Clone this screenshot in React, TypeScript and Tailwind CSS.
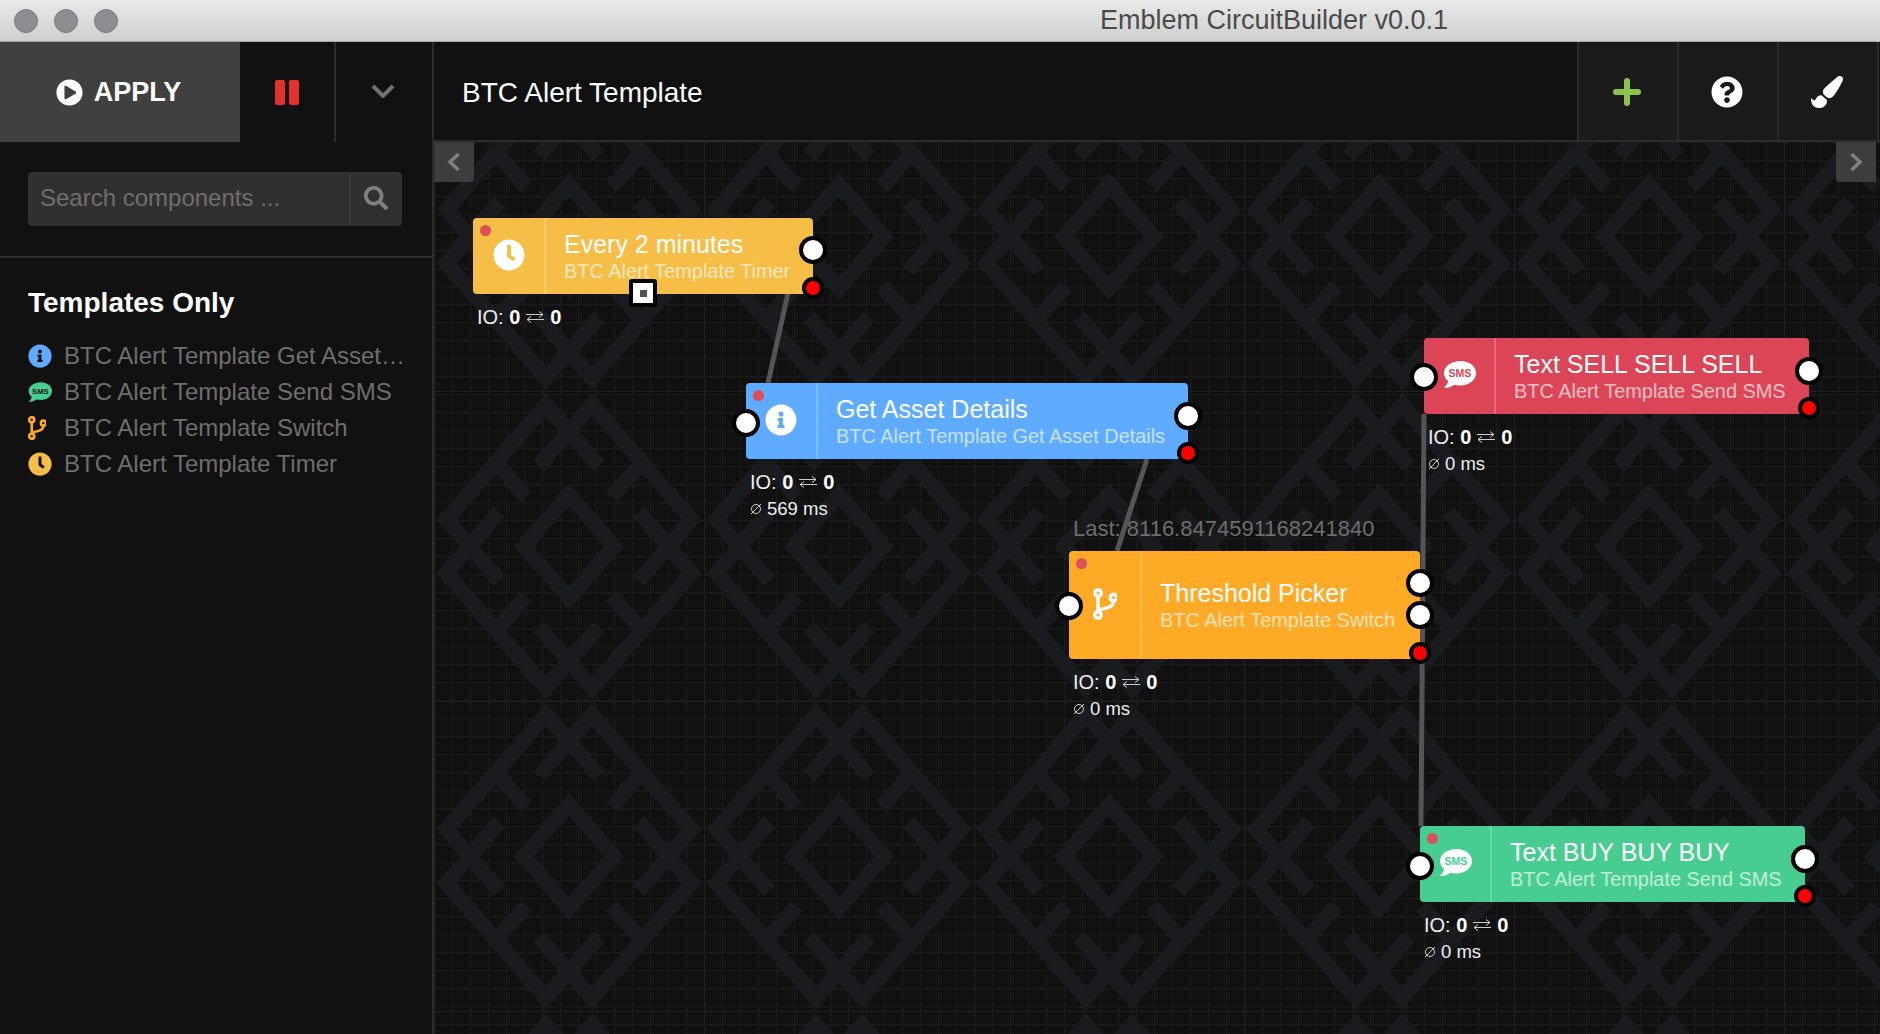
import { FaClock, FaInfoCircle, FaPaintBrush, FaPlayCircle, FaQuestionCircle, FaSearch } from "react-icons/fa";

const SANS = "font-['Liberation_Sans',Arial,sans-serif]";

// speech bubble with the letters in the fill colour behind it
function SmsIcon({ className, bubble, letters }: { className: string; bubble: string; letters: string }) {
  return (
    <svg viewBox="0 0 33 29" className={className}>
      <path
        fill={bubble}
        d="M17.5 1C8.9 1 1 5.9 1 13c0 3.2 1.6 6 4.2 8.1C4.9 23.8 3 26.4.6 28c3.6.2 8-1 11.1-3.2 1.8.4 3.8.6 5.8.6C26.2 25.4 33 20 33 13S26.200 1 17.500 1z"
      />
      <text
        x="17"
        y="17"
        textAnchor="middle"
        fontSize="10.500"
        fontWeight="700"
        fontFamily="'Liberation Sans',sans-serif"
        fill={letters}
      >
        SMS
      </text>
    </svg>
  );
}

function BranchIcon({ className }: { className: string }) {
  return (
    <svg viewBox="0 0 24 32" fill="none" stroke="currentColor" strokeWidth="3.500" className={className}>
      <circle cx="5" cy="5" r="3.300" />
      <circle cx="5" cy="27" r="3.300" />
      <circle cx="20.500" cy="9.500" r="3.300" />
      <path d="M5 8.500v15" />
      <path d="M20.500 13c0 5-4 6.500-8 7.300-4 .8-7.500 1-7.500 3.700" />
    </svg>
  );
}

function Background() {
  return (
    <svg className="absolute inset-0 w-full h-full">
      <defs>
        <g id="quarter">
          <path d="M29.900 -80.400 L-23 -141.600 L-122.500 -26.800 L-69.700 34.400" />
          <path d="M-71.600 -82.300 L-42.900 -49.700" />
        </g>
        <pattern id="grid" width="18" height="18" patternUnits="userSpaceOnUse">
          <path d="M.5 0V18M0 .5H18" stroke="#1a1a1a" strokeWidth="1.500" fill="none" />
        </pattern>
        <pattern id="tile" width="270" height="310" patternUnits="userSpaceOnUse" patternTransform="translate(0 -61)">
          <path d="M.5 0V310M0 .5H270" stroke="#202020" strokeWidth="1" fill="none" />
          <g transform="translate(135 155.400)" fill="none" stroke="#1a1b1f" strokeWidth="15" strokeLinejoin="miter">
            <path d="M0 -52 L45 0 L0 52 L-45 0Z" />
            <use href="#quarter" />
            <use href="#quarter" transform="scale(-1 1)" />
            <use href="#quarter" transform="scale(1 -1)" />
            <use href="#quarter" transform="scale(-1 -1)" />
          </g>
        </pattern>
      </defs>
      <rect width="100%" height="100%" fill="url(#grid)" />
      <rect width="100%" height="100%" fill="url(#tile)" />
      {/* wires */}
      <g stroke="#555555" strokeWidth="5" fill="none">
        <path d="M354 151 L334 241" />
        <path d="M713 317 L683 409" />
        <path d="M990 272 L987 684" />
      </g>
    </svg>
  );
}

function Port({ className }: { className: string }) {
  return <div className={`absolute w-[28px] h-[28px] -translate-x-1/2 -translate-y-1/2 rounded-full bg-white border-4 border-black ${className}`} />;
}

function ErrorPort({ className }: { className: string }) {
  return <div className={`absolute w-[22px] h-[22px] -translate-x-1/2 -translate-y-1/2 rounded-full bg-[#ff0000] border-4 border-black ${className}`} />;
}

function Stats({ ms }: { ms?: string }) {
  return (
    <div className="mt-[11px] ml-[4px] text-[20px] leading-[24px] text-[#eeeeee]">
      <div className="flex items-center gap-[6px]">
        <span>
          IO: <b className="text-white">0</b>
        </span>
        <svg viewBox="0 0 18 12" className="w-[18px] h-[12px]" fill="none" stroke="#cccccc" strokeWidth="1">
          <path d="M0 3.500h17M13 .5l4 3M18 8.500H1M5 5.500l-4 3M5 11.500l-4-3M13 6.500l4-3" />
        </svg>
        <b className="text-white">0</b>
      </div>
      {ms && (
        <div className="mt-[3px] flex items-center gap-[5px] text-[18.500px] leading-[24px]">
          <svg viewBox="0 0 12 12" className="w-[12px] h-[12px]" fill="none" stroke="#d0d0d0" strokeWidth="1">
            <circle cx="6" cy="6" r="4.500" />
            <path d="M1 11L11 1" />
          </svg>
          {ms}
        </div>
      )}
    </div>
  );
}

function CardBody({
  icon,
  title,
  sub,
  dot,
  color,
  cardClass,
  cellClass = "w-[72px]",
}: {
  icon: React.ReactNode;
  title: string;
  sub: string;
  dot: boolean;
  color: string;
  cardClass: string;
  cellClass?: string;
}) {
  return (
    <div className={`relative flex rounded-[4px] ${color} ${cardClass}`}>
      {dot && <div className="absolute left-[7px] top-[7px] w-[11px] h-[11px] rounded-full bg-[#de4f5c]" />}
      <div className={`shrink-0 flex items-center justify-center pb-[3px] border-r-2 border-white/20 text-white ${cellClass}`}>{icon}</div>
      <div className="pl-[18px] pb-[1px] flex flex-col justify-center min-w-0 whitespace-nowrap">
        <div className="text-[25px] leading-[30px] text-white">{title}</div>
        <div className="text-[19.900px] leading-[24px] text-white/65">{sub}</div>
      </div>
    </div>
  );
}

const sidebarItems = [
  { label: "BTC Alert Template Get Asset…", icon: <FaInfoCircle className="w-[24px] h-[24px] text-[#5eabff]" /> },
  { label: "BTC Alert Template Send SMS", icon: <SmsIcon className="w-[24px] h-[22px]" bubble="#48cd91" letters="#111111" /> },
  { label: "BTC Alert Template Switch", icon: <BranchIcon className="w-[18px] h-[24px] text-[#ffaa27]" /> },
  { label: "BTC Alert Template Timer", icon: <FaClock className="w-[24px] h-[24px] text-[#f6bd47]" /> },
];

function Sidebar() {
  return (
    <aside className="w-[434px] shrink-0 flex flex-col bg-[#111111] border-r-2 border-[#2b2b2b]">
      <div className="h-[100px] flex shrink-0">
        <button className="w-[240px] pr-[3px] flex items-center justify-center gap-[11px] bg-[#404040] text-white font-bold text-[27px]">
          <FaPlayCircle className="w-[27px] h-[27px]" />
          APPLY
        </button>
        <div className="w-[96px] flex items-center justify-center gap-[4px] border-r-2 border-[#2b2b2b]">
          <div className="w-[10px] h-[25px] rounded-[2px] bg-[#e3312f]" />
          <div className="w-[10px] h-[25px] rounded-[2px] bg-[#e3312f]" />
        </div>
        <div className="flex-1 pb-[2px] pr-[2px] flex items-center justify-center">
          <svg viewBox="0 0 24 14" className="w-[24px] h-[14px]" fill="none" stroke="#707070" strokeWidth="4">
            <path d="M2 2l10 10L22 2" />
          </svg>
        </div>
      </div>
      <div className="h-[116px] pl-[28px] pr-[30px] pt-[30px] border-b-2 border-[#2b2b2b] shrink-0">
        <div className="h-[54px] flex rounded-[4px] bg-[#303030]">
          <div className="flex-1 flex items-center pl-[12px] pb-[2px] text-[24px] text-[#6f6f6f]">Search components ...</div>
          <div className="w-[53px] my-[2px] pb-[3px] pr-[2px] flex items-center justify-center border-l-2 border-[#3d3d3d]">
            <FaSearch className="w-[24px] h-[24px] text-[#808080]" />
          </div>
        </div>
      </div>
      <div className="pl-[28px] pr-[20px] pt-[29px]">
        <h2 className="text-[28px] leading-[32px] font-bold text-white">Templates Only</h2>
        <ul className="mt-[19px]">
          {sidebarItems.map((item) => (
            <li key={item.label} className="h-[36px] flex items-center">
              <div className="w-[36px] shrink-0 flex items-center">{item.icon}</div>
              <span className="whitespace-nowrap text-[24px] text-[#6e6e6e]">{item.label}</span>
            </li>
          ))}
        </ul>
      </div>
    </aside>
  );
}

function Header() {
  return (
    <header className="h-[100px] shrink-0 flex items-stretch bg-[#111111] border-b-2 border-[#2b2b2b]">
      <div className="flex-1 flex items-center pl-[28px] pt-[3px] text-[28px] text-white">BTC Alert Template</div>
      <button className="w-[100px] pr-[2px] pt-[2px] flex items-center justify-center bg-[#1a1a1a] border-l-2 border-[#2b2b2b]">
        <svg viewBox="0 0 28 28" className="w-[28px] h-[28px]" fill="none" stroke="#8bc34a" strokeWidth="6" strokeLinecap="round">
          <path d="M14 3v22M3 14h22" />
        </svg>
      </button>
      <button className="w-[100px] pr-[2px] pt-[2px] flex items-center justify-center bg-[#1a1a1a] border-l-2 border-[#2b2b2b]">
        <FaQuestionCircle className="w-[32px] h-[32px] text-white" />
      </button>
      <button className="w-[100px] pr-[2px] pt-[2px] flex items-center justify-center bg-[#1a1a1a] border-l-2 border-[#2b2b2b]">
        <FaPaintBrush className="w-[32px] h-[32px] text-white" />
      </button>
      <div className="w-[3px] border-l-2 border-[#2b2b2b]" />
    </header>
  );
}

function Canvas() {
  return (
    <main className="relative flex-1 min-h-0 overflow-hidden bg-[#111112]">
      <Background />

      <div className="absolute left-0 top-0 w-[40px] h-[40px] flex items-center justify-center rounded-br-[4px] bg-[#3d3d3d]">
        <svg viewBox="0 0 14 20" className="w-[14px] h-[20px]" fill="none" stroke="#808080" strokeWidth="3.500">
          <path d="M11.500 2L3 10l8.500 8" />
        </svg>
      </div>
      <div className="absolute right-[4px] top-0 w-[40px] h-[40px] flex items-center justify-center rounded-bl-[4px] bg-[#3d3d3d]">
        <svg viewBox="0 0 14 20" className="w-[14px] h-[20px]" fill="none" stroke="#808080" strokeWidth="3.500">
          <path d="M2.500 2L11 10l-8.500 8" />
        </svg>
      </div>

      {/* Timer */}
      <div className="absolute left-[39px] top-[76px] w-[340px]">
        <div className="relative">
          <CardBody color="bg-[#f6bd47]" cardClass="h-[76px]" cellClass="w-[73px]" dot title="Every 2 minutes" sub="BTC Alert Template Timer" icon={<FaClock className="w-[32px] h-[32px]" />} />
          <Port className="left-[340px] top-[32px]" />
          <ErrorPort className="left-[340px] top-[70px]" />
          <div className="absolute left-[170px] top-[75px] -translate-x-1/2 -translate-y-1/2 w-[28px] h-[28px] flex items-center justify-center rounded-[3px] bg-white border-4 border-black">
            <div className="w-[7px] h-[7px] bg-[#555555]" />
          </div>
        </div>
        <Stats />
      </div>

      {/* Get asset */}
      <div className="absolute left-[312px] top-[241px] w-[442px]">
        <div className="relative">
          <CardBody color="bg-[#5eabff]" cardClass="h-[76px]" dot title="Get Asset Details" sub="BTC Alert Template Get Asset Details" icon={<FaInfoCircle className="w-[32px] h-[32px]" />} />
          <Port className="left-0 top-[40px]" />
          <Port className="left-[442px] top-[33px]" />
          <ErrorPort className="left-[442px] top-[70px]" />
        </div>
        <Stats ms="569 ms" />
      </div>

      {/* Threshold */}
      <div className="absolute left-[635px] top-[409px] w-[351px]">
        <div className="absolute left-[4px] -top-[34px] text-[22px] leading-[24px] whitespace-nowrap text-[#6e6e6e]">Last: 8116.8474591168241840</div>
        <div className="relative">
          <CardBody color="bg-[#ffaa27]" cardClass="h-[108px]" cellClass="w-[73px]" dot title="Threshold Picker" sub="BTC Alert Template Switch" icon={<BranchIcon className="w-[24px] h-[32px]" />} />
          <Port className="left-0 top-[55px]" />
          <Port className="left-[351px] top-[32px]" />
          <Port className="left-[351px] top-[64px]" />
          <ErrorPort className="left-[351px] top-[102px]" />
        </div>
        <Stats ms="0 ms" />
      </div>

      {/* Sell */}
      <div className="absolute left-[990px] top-[196px] w-[385px]">
        <div className="relative">
          <CardBody color="bg-[#dc4558]" cardClass="h-[76px]" dot={false} title="Text SELL SELL SELL" sub="BTC Alert Template Send SMS" icon={<SmsIcon className="w-[33px] h-[29px]" bubble="#ffffff" letters="#dc4558" />} />
          <Port className="left-0 top-[39px]" />
          <Port className="left-[385px] top-[33px]" />
          <ErrorPort className="left-[385px] top-[70px]" />
        </div>
        <Stats ms="0 ms" />
      </div>

      {/* Buy */}
      <div className="absolute left-[986px] top-[684px] w-[385px]">
        <div className="relative">
          <CardBody color="bg-[#48cd91]" cardClass="h-[76px]" dot title="Text BUY BUY BUY" sub="BTC Alert Template Send SMS" icon={<SmsIcon className="w-[33px] h-[29px]" bubble="#ffffff" letters="#48cd91" />} />
          <Port className="left-0 top-[40px]" />
          <Port className="left-[385px] top-[33px]" />
          <ErrorPort className="left-[385px] top-[70px]" />
        </div>
        <Stats ms="0 ms" />
      </div>
    </main>
  );
}

export default function App() {
  return (
    <div className={`w-[1880px] h-[1034px] flex flex-col overflow-hidden bg-[#111111] ${SANS}`}>
      <div className="h-[42px] shrink-0 flex items-center bg-gradient-to-b from-[#e9e9e9] to-[#cfcfcf] border-b border-[#a8a8a8]">
        <div className="flex gap-[16px] pl-[14px]">
          <div className="w-[24px] h-[24px] rounded-full bg-[#8e8d92] border border-[#7a797e]" />
          <div className="w-[24px] h-[24px] rounded-full bg-[#8e8d92] border border-[#7a797e]" />
          <div className="w-[24px] h-[24px] rounded-full bg-[#8e8d92] border border-[#7a797e]" />
        </div>
        <div className="ml-[982px] text-[27px] text-[#4a4a4a] whitespace-nowrap">Emblem CircuitBuilder v0.0.1</div>
      </div>
      <div className="flex-1 min-h-0 flex">
        <Sidebar />
        <div className="flex-1 min-w-0 flex flex-col">
          <Header />
          <Canvas />
        </div>
      </div>
    </div>
  );
}
